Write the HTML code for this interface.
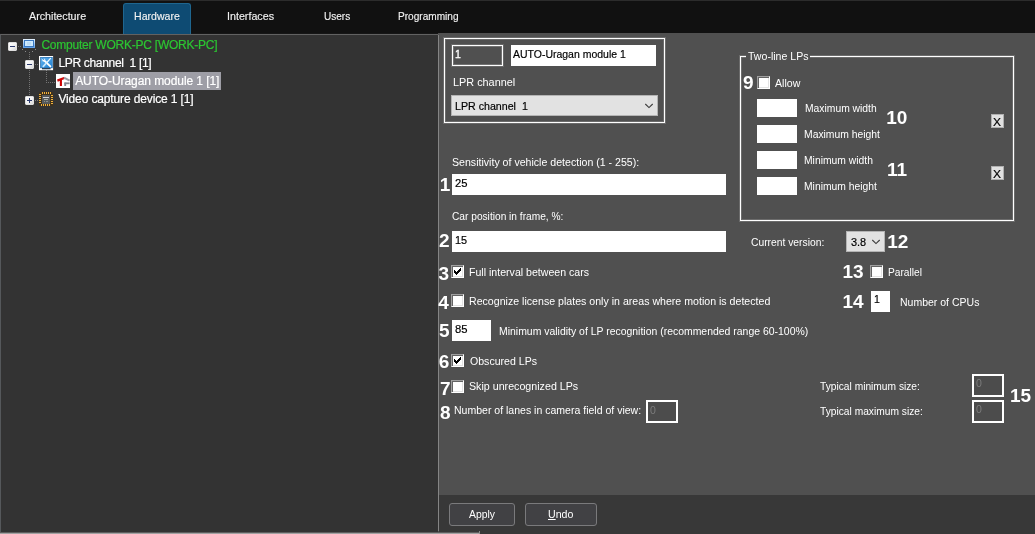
<!DOCTYPE html>
<html><head><meta charset="utf-8"><title>AUTO-Uragan module settings</title>
<style>
html,body{margin:0;padding:0;}
body{width:1035px;height:534px;overflow:hidden;background:#505050;position:relative;font-family:"Liberation Sans",sans-serif;font-size:11px;color:#fff;}
div,span{box-sizing:border-box;}
.a{position:absolute;}
.wrap{position:absolute;left:0;top:0;width:1035px;height:534px;will-change:transform;}
.gray{filter:grayscale(1);}
.tx{position:absolute;white-space:nowrap;}
#topbar{left:0;top:0;width:1035px;height:33px;background:#111111;border-top:1px solid #2c2c2c;}
#hwtab{left:123px;top:3px;width:68px;height:31px;background:#0e4b73;border:1px solid #1f668f;border-bottom:none;border-radius:3px 3px 0 0;}
#left{left:0;top:34px;width:438px;height:500px;background:#333333;border-top:1px solid #626262;border-left:1px solid #55585b;}
#lgap{left:0;top:33px;width:438px;height:1px;background:#161616;}
#lbot{left:0;top:532px;width:480px;height:2px;background:linear-gradient(#5e5e5e 50%,#a2a2a2 50%);}
#ltick{left:479px;top:531px;width:1px;height:3px;background:#8a8a8a;}
#split{left:438px;top:35px;width:1px;height:496px;background:#858585;}
#right{left:439px;top:33px;width:596px;height:462px;background:#505050;}
#bottombar{left:439px;top:495px;width:596px;height:39px;background:#383838;}
.sel{left:73px;top:72px;width:148px;height:18px;background:#9e9ea6;}
.exp{position:absolute;width:9px;height:9px;background:linear-gradient(135deg,#ffffff 0%,#f2f2f2 55%,#d6d6d6 100%);border:1px solid #dedede;border-radius:1px;}
.exp i{position:absolute;left:1px;top:3px;width:5px;height:1px;background:#2b3a6e;}
.exp b{position:absolute;left:3px;top:1px;width:1px;height:5px;background:#2b3a6e;}
.hd{position:absolute;height:1px;background-image:linear-gradient(90deg,#747474 50%,transparent 50%);background-size:2px 1px;}
.vd{position:absolute;width:1px;background-image:linear-gradient(180deg,#747474 50%,transparent 50%);background-size:1px 2px;}
.gb{position:absolute;border:1px solid #fff;box-shadow:0 0 0 1px rgba(255,255,255,.16),inset 0 0 0 1px rgba(255,255,255,.16);}
.inp{position:absolute;background:#fff;}
.dis1{position:absolute;background:#505050;border:1px solid #fff;box-shadow:0 0 0 1px rgba(255,255,255,.14),inset 0 0 0 1px rgba(255,255,255,.2);}
.dis2{position:absolute;background:#4c4c4c;border:2px solid #fff;}
.cmb{position:absolute;background:#e2e2e2;border:1px solid #b4b4b4;}
.cb{position:absolute;width:13px;height:13px;background:#fff;border-top:1px solid #a0a0a0;border-left:1px solid #a0a0a0;border-right:1px solid #fff;border-bottom:1px solid #fff;box-shadow:inset 1px 1px 0 #646464,inset -1px -1px 0 #e3e3e3;}
.xb{position:absolute;width:13px;height:14px;background:#e1e1e1;border:1px solid #b0b0b0;}
.btn{position:absolute;border:1px solid #7a7a7c;background:#414144;border-radius:3px;}
svg{position:absolute;overflow:visible;}
</style></head><body>
<div id="topbar" class="a"></div>
<div id="lgap" class="a"></div>
<div id="hwtab" class="a"></div>
<div id="left" class="a"></div>
<div id="split" class="a"></div>
<div id="right" class="a"></div>
<div id="bottombar" class="a"></div>
<div id="lbot" class="a"></div><div id="ltick" class="a"></div>

<!-- tree -->
<div class="a sel"></div>
<div class="hd" style="left:18px;top:46px;width:4px"></div>
<div class="vd" style="left:29px;top:52px;width:1px;height:44px"></div>
<div class="hd" style="left:35px;top:64px;width:4px"></div>
<div class="vd" style="left:46px;top:70px;width:1px;height:12px"></div>
<div class="hd" style="left:46px;top:82px;width:10px"></div>
<div class="hd" style="left:35px;top:100px;width:4px"></div>
<div class="exp" style="left:8px;top:42px"><i></i></div>
<div class="exp" style="left:25px;top:60px"><i></i></div>
<div class="exp" style="left:25px;top:96px"><i></i><b></b></div>
<svg style="left:0;top:0" width="80" height="110" viewBox="0 0 80 110" shape-rendering="crispEdges">
<defs>
<linearGradient id="gmon" x1="0" y1="0" x2="0" y2="1"><stop offset="0" stop-color="#e6f3ff"/><stop offset="1" stop-color="#5c9ee8"/></linearGradient>
<linearGradient id="gblue" x1="0" y1="0" x2="1" y2="1"><stop offset="0" stop-color="#62b4f0"/><stop offset="1" stop-color="#1f7fd0"/></linearGradient>
</defs>
<!-- computer -->
<rect x="23" y="39" width="12" height="9" fill="url(#gmon)"/>
<rect x="24" y="40" width="10" height="7" fill="#3a78c2"/>
<rect x="25" y="41" width="8" height="5" fill="#cdeaff"/>
<rect x="27" y="42" width="4" height="3" fill="#bcdcf6"/>
<g fill="#8a8a8a"><rect x="22" y="49" width="1" height="1"/><rect x="25" y="51" width="1" height="1"/><rect x="32" y="51" width="1" height="1"/><rect x="35" y="49" width="1" height="1"/></g>
<!-- LPR channel -->
<g shape-rendering="geometricPrecision">
<rect x="39" y="56" width="14.1" height="14.2" fill="#ffffff"/>
<rect x="40.2" y="57" width="12.4" height="11.2" fill="#245f98"/>
<rect x="40.7" y="57.5" width="11.7" height="10.2" fill="url(#gblue)"/>
<path d="M44.3 60.6 L50.4 66.4" stroke="#ffffff" stroke-width="1.9" stroke-linecap="round" fill="none"/>
<circle cx="43.8" cy="60" r="1.55" fill="#ffffff"/>
<path d="M42.2 58.2 L44.1 60.1 L43 58 Z" fill="#3d97de" stroke="#3d97de" stroke-width="0.7"/>
<path d="M50.5 58.4 L46.6 62.8" stroke="#e8f7ff" stroke-width="1.3" stroke-linecap="round" fill="none"/>
<path d="M45.9 63.5 L43.3 66.4" stroke="#c6e8ff" stroke-width="1.8" stroke-linecap="round" fill="none"/>
<rect x="42" y="68" width="8.6" height="1.3" fill="#2d4258"/>
</g>
<!-- module icon -->
<rect x="56" y="74" width="14" height="14" fill="#ffffff"/>
<g shape-rendering="geometricPrecision" fill="none">
<path d="M57.4 80.6 L64.2 78" stroke="#d00a0a" stroke-width="2.3"/>
<path d="M60.9 79.6 L60.9 86" stroke="#cc0000" stroke-width="2.1"/>
<path d="M64 77.7 L69.6 80.7" stroke="#9a9aa4" stroke-width="2"/>
<path d="M64.4 83.3 L69.6 83.3" stroke="#84848e" stroke-width="1.8"/>
<path d="M65.2 82.6 L65.2 86" stroke="#84848e" stroke-width="1.9"/>
</g>
<!-- chip -->
<rect x="39" y="92" width="14" height="14" fill="#4a3208" opacity="0.55"/>
<g fill="#f2b23e">
<rect x="42" y="92" width="1" height="2"/><rect x="44" y="92" width="1" height="2"/><rect x="46" y="92" width="1" height="2"/><rect x="48" y="92" width="1" height="2"/><rect x="50" y="92" width="1" height="2"/>
<rect x="41" y="104" width="1" height="2"/><rect x="43" y="104" width="1" height="2"/><rect x="45" y="104" width="1" height="2"/><rect x="47" y="104" width="1" height="2"/><rect x="49" y="104" width="1" height="2"/>
<rect x="39" y="94" width="2" height="1"/><rect x="39" y="96" width="2" height="1"/><rect x="39" y="98" width="2" height="1"/><rect x="39" y="100" width="2" height="1"/><rect x="39" y="102" width="2" height="1"/>
<rect x="51" y="95" width="2" height="1"/><rect x="51" y="97" width="2" height="1"/><rect x="51" y="99" width="2" height="1"/><rect x="51" y="101" width="2" height="1"/><rect x="51" y="103" width="2" height="1"/>
</g>
<rect x="42" y="95" width="8" height="9" fill="#565a5c"/>
<rect x="43" y="97" width="6" height="1" fill="#d6d6d6"/>
<rect x="44" y="99" width="4" height="1" fill="#a9b0a6"/>
<rect x="44" y="101" width="1" height="1" fill="#8a8f8a"/><rect x="46" y="101" width="2" height="1" fill="#8a8f8a"/>
</svg>


<!-- group 1 -->
<div class="gb" style="left:444px;top:38px;width:221px;height:85px"></div>
<div class="dis1" style="left:452px;top:45px;width:51px;height:21px"></div>
<div class="inp" style="left:511px;top:45px;width:145px;height:21px"></div>
<div class="cmb" style="left:451px;top:95px;width:207px;height:21px"></div>
<svg style="left:645px;top:103px" width="8" height="6" viewBox="0 0 8 6"><path d="M0.3 1 L4 4.6 L7.7 1" fill="none" stroke="#3c3c3c" stroke-width="1.1"/></svg>

<!-- main fields -->
<div class="inp" style="left:452px;top:174px;width:274px;height:21px"></div>
<div class="inp" style="left:452px;top:231px;width:274px;height:21px"></div>
<div class="cb" style="left:451px;top:265px"></div>
<div class="cb" style="left:451px;top:294px"></div>
<div class="inp" style="left:452px;top:320px;width:39px;height:21px"></div>
<div class="cb" style="left:451px;top:354px"></div>
<div class="cb" style="left:451px;top:380px"></div>
<div class="dis2" style="left:646px;top:400px;width:32px;height:23px"></div>
<svg style="left:454px;top:268px" width="7" height="7" viewBox="0 0 7 7" shape-rendering="crispEdges"><path d="M0 2h1v3h-1z M1 3h1v3h-1z M2 4h1v3h-1z M3 3h1v3h-1z M4 2h1v3h-1z M5 1h1v3h-1z M6 0h1v3h-1z" fill="#000"/></svg>
<svg style="left:454px;top:357px" width="7" height="7" viewBox="0 0 7 7" shape-rendering="crispEdges"><path d="M0 2h1v3h-1z M1 3h1v3h-1z M2 4h1v3h-1z M3 3h1v3h-1z M4 2h1v3h-1z M5 1h1v3h-1z M6 0h1v3h-1z" fill="#000"/></svg>

<!-- group 2 -->
<div class="gb" style="left:740px;top:56px;width:274px;height:165px"></div>
<div class="a" style="left:746px;top:55px;width:64px;height:3px;background:#505050"></div>
<div class="cb" style="left:757px;top:76px"></div>
<div class="inp" style="left:757px;top:99px;width:40px;height:18px"></div>
<div class="inp" style="left:757px;top:125px;width:40px;height:18px"></div>
<div class="inp" style="left:757px;top:151px;width:40px;height:18px"></div>
<div class="inp" style="left:757px;top:177px;width:40px;height:18px"></div>
<div class="xb" style="left:991px;top:114px"></div>
<div class="xb" style="left:991px;top:166px"></div>

<div class="cmb" style="left:846px;top:231px;width:39px;height:21px"></div>
<svg style="left:872px;top:239px" width="8" height="6" viewBox="0 0 8 6"><path d="M0.3 1 L4 4.6 L7.7 1" fill="none" stroke="#3c3c3c" stroke-width="1.1"/></svg>
<div class="cb" style="left:870px;top:265px"></div>
<div class="inp" style="left:871px;top:291px;width:19px;height:21px"></div>
<div class="dis2" style="left:972px;top:374px;width:32px;height:23px"></div>
<div class="dis2" style="left:972px;top:400px;width:32px;height:23px"></div>

<!-- buttons -->
<div class="btn" style="left:449px;top:503px;width:66px;height:23px"></div>
<div class="btn" style="left:525px;top:503px;width:72px;height:23px"></div>

<div class="wrap">
<div class="tx" id="r1" style="left:41.4px;top:38.2px;font-size:12px;line-height:14px;color:#2cc632;letter-spacing:-0.231px;-webkit-text-stroke:0.2px #2cc632;">Computer WORK-PC [WORK-PC]</div>
</div>
<div class="wrap gray">
<div class="tx" id="t1" style="left:29.0px;top:9.2px;font-size:11.8px;line-height:14px;color:#f2f2f2;transform-origin:0 50%;transform:scaleX(0.9070);-webkit-text-stroke:0.15px #f2f2f2;">Architecture</div>
<div class="tx" id="t2" style="left:134.0px;top:9.2px;font-size:11.8px;line-height:14px;color:#f2f2f2;transform-origin:0 50%;transform:scaleX(0.8956);-webkit-text-stroke:0.15px #f2f2f2;">Hardware</div>
<div class="tx" id="t3" style="left:226.8px;top:9.2px;font-size:11.8px;line-height:14px;color:#f2f2f2;transform-origin:0 50%;transform:scaleX(0.9071);-webkit-text-stroke:0.15px #f2f2f2;">Interfaces</div>
<div class="tx" id="t4" style="left:323.6px;top:9.2px;font-size:11.8px;line-height:14px;color:#f2f2f2;transform-origin:0 50%;transform:scaleX(0.8503);-webkit-text-stroke:0.15px #f2f2f2;">Users</div>
<div class="tx" id="t5" style="left:398.1px;top:9.2px;font-size:11.8px;line-height:14px;color:#f2f2f2;transform-origin:0 50%;transform:scaleX(0.8558);-webkit-text-stroke:0.15px #f2f2f2;">Programming</div>
<div class="tx" id="r2" style="left:58.4px;top:56.2px;font-size:12px;line-height:14px;color:#fff;letter-spacing:-0.319px;-webkit-text-stroke:0.2px #fff;">LPR channel&nbsp; 1 [1]</div>
<div class="tx" id="r3" style="left:75.2px;top:74.2px;font-size:12px;line-height:14px;color:#fff;letter-spacing:-0.069px;-webkit-text-stroke:0.2px #fff;">AUTO-Uragan module 1 [1]</div>
<div class="tx" id="r4" style="left:58.4px;top:92.2px;font-size:12px;line-height:14px;color:#fff;letter-spacing:-0.133px;-webkit-text-stroke:0.2px #fff;">Video capture device 1 [1]</div>
<div class="tx" id="g1id" style="left:455.3px;top:46.8px;font-size:11.7px;line-height:14px;color:#fff;transform-origin:0 50%;transform:scaleX(0.9000);-webkit-text-stroke:0.35px #fff;">1</div>
<div class="tx" id="g1name" style="left:513.1px;top:46.8px;font-size:11.7px;line-height:14px;color:#000;transform-origin:0 50%;transform:scaleX(0.8966);-webkit-text-stroke:0.2px #000;">AUTO-Uragan module 1</div>
<div class="tx" id="g1lbl" style="left:452.9px;top:74.8px;font-size:11.7px;line-height:14px;color:#fff;transform-origin:0 50%;transform:scaleX(0.9292);">LPR channel</div>
<div class="tx" id="g1cmb" style="left:454.8px;top:98.8px;font-size:11.7px;line-height:14px;color:#000;transform-origin:0 50%;transform:scaleX(0.9109);-webkit-text-stroke:0.2px #000;">LPR channel&nbsp; 1</div>
<div class="tx" id="l1" style="left:451.6px;top:154.8px;font-size:11.7px;line-height:14px;color:#fff;transform-origin:0 50%;transform:scaleX(0.9061);">Sensitivity of vehicle detection (1 - 255):</div>
<div class="tx" id="v1" style="left:454.7px;top:175.8px;font-size:11.7px;line-height:14px;color:#000;transform-origin:0 50%;transform:scaleX(0.9604);-webkit-text-stroke:0.2px #000;">25</div>
<div class="tx" id="l2" style="left:451.6px;top:208.8px;font-size:11.7px;line-height:14px;color:#fff;transform-origin:0 50%;transform:scaleX(0.8705);">Car position in frame, %:</div>
<div class="tx" id="v2" style="left:455.0px;top:232.8px;font-size:11.7px;line-height:14px;color:#000;transform-origin:0 50%;transform:scaleX(0.9297);-webkit-text-stroke:0.2px #000;">15</div>
<div class="tx" id="l3" style="left:468.8px;top:264.8px;font-size:11.7px;line-height:14px;color:#fff;transform-origin:0 50%;transform:scaleX(0.9062);">Full interval between cars</div>
<div class="tx" id="l4" style="left:468.8px;top:293.8px;font-size:11.7px;line-height:14px;color:#fff;transform-origin:0 50%;transform:scaleX(0.9076);">Recognize license plates only in areas where motion is detected</div>
<div class="tx" id="v5" style="left:454.7px;top:321.8px;font-size:11.7px;line-height:14px;color:#000;transform-origin:0 50%;transform:scaleX(0.9604);-webkit-text-stroke:0.2px #000;">85</div>
<div class="tx" id="l5" style="left:498.9px;top:323.8px;font-size:11.7px;line-height:14px;color:#fff;transform-origin:0 50%;transform:scaleX(0.8936);">Minimum validity of LP recognition (recommended range 60-100%)</div>
<div class="tx" id="l6" style="left:469.7px;top:353.8px;font-size:11.7px;line-height:14px;color:#fff;transform-origin:0 50%;transform:scaleX(0.9046);">Obscured LPs</div>
<div class="tx" id="l7" style="left:468.8px;top:378.8px;font-size:11.7px;line-height:14px;color:#fff;transform-origin:0 50%;transform:scaleX(0.9134);">Skip unrecognized LPs</div>
<div class="tx" id="l8" style="left:453.6px;top:402.8px;font-size:11.7px;line-height:14px;color:#fff;transform-origin:0 50%;transform:scaleX(0.9001);">Number of lanes in camera field of view:</div>
<div class="tx" id="v8" style="left:650.3px;top:402.8px;font-size:11.7px;line-height:14px;color:#7c7c7c;transform-origin:0 50%;transform:scaleX(0.9000);">0</div>
<div class="tx" id="g2t" style="left:748.1px;top:48.8px;font-size:11.7px;line-height:14px;color:#fff;transform-origin:0 50%;transform:scaleX(0.9043);">Two-line LPs</div>
<div class="tx" id="l9" style="left:775.2px;top:75.8px;font-size:11.7px;line-height:14px;color:#fff;transform-origin:0 50%;transform:scaleX(0.9056);">Allow</div>
<div class="tx" id="la" style="left:804.9px;top:100.8px;font-size:11.7px;line-height:14px;color:#fff;transform-origin:0 50%;transform:scaleX(0.8831);">Maximum width</div>
<div class="tx" id="lb" style="left:803.7px;top:126.8px;font-size:11.7px;line-height:14px;color:#fff;transform-origin:0 50%;transform:scaleX(0.8863);">Maximum height</div>
<div class="tx" id="lc" style="left:803.7px;top:152.8px;font-size:11.7px;line-height:14px;color:#fff;transform-origin:0 50%;transform:scaleX(0.8840);">Minimum width</div>
<div class="tx" id="ld" style="left:803.7px;top:178.8px;font-size:11.7px;line-height:14px;color:#fff;transform-origin:0 50%;transform:scaleX(0.8836);">Minimum height</div>
<div class="tx" id="lcv" style="left:750.8px;top:234.8px;font-size:11.7px;line-height:14px;color:#fff;transform-origin:0 50%;transform:scaleX(0.8815);">Current version:</div>
<div class="tx" id="v12" style="left:851.0px;top:234.8px;font-size:11.7px;line-height:14px;color:#000;transform-origin:0 50%;transform:scaleX(0.9354);-webkit-text-stroke:0.2px #000;">3.8</div>
<div class="tx" id="l13" style="left:887.9px;top:264.8px;font-size:11.7px;line-height:14px;color:#fff;transform-origin:0 50%;transform:scaleX(0.8721);">Parallel</div>
<div class="tx" id="v14" style="left:873.8px;top:291.8px;font-size:11.7px;line-height:14px;color:#000;transform-origin:0 50%;transform:scaleX(0.9000);-webkit-text-stroke:0.2px #000;">1</div>
<div class="tx" id="l14" style="left:900.4px;top:294.8px;font-size:11.7px;line-height:14px;color:#fff;transform-origin:0 50%;transform:scaleX(0.8988);">Number of CPUs</div>
<div class="tx" id="l15a" style="left:819.8px;top:378.8px;font-size:11.7px;line-height:14px;color:#fff;transform-origin:0 50%;transform:scaleX(0.8739);">Typical minimum size:</div>
<div class="tx" id="l15b" style="left:819.8px;top:403.8px;font-size:11.7px;line-height:14px;color:#fff;transform-origin:0 50%;transform:scaleX(0.8744);">Typical maximum size:</div>
<div class="tx" id="v15a" style="left:976.2px;top:375.8px;font-size:11.7px;line-height:14px;color:#7c7c7c;transform-origin:0 50%;transform:scaleX(0.9000);">0</div>
<div class="tx" id="v15b" style="left:976.2px;top:401.8px;font-size:11.7px;line-height:14px;color:#7c7c7c;transform-origin:0 50%;transform:scaleX(0.9000);">0</div>
<div class="tx" id="x1" style="left:993.0px;top:114.8px;font-size:11.7px;line-height:14px;color:#000;transform-origin:0 50%;transform:scaleX(1.0261);-webkit-text-stroke:0.2px #000;">X</div>
<div class="tx" id="x2" style="left:993.0px;top:166.8px;font-size:11.7px;line-height:14px;color:#000;transform-origin:0 50%;transform:scaleX(1.0261);-webkit-text-stroke:0.2px #000;">X</div>
<div class="tx" id="bapply" style="left:468.9px;top:507.2px;font-size:11.8px;line-height:14px;color:#fff;transform-origin:0 50%;transform:scaleX(0.8809);">Apply</div>
<div class="tx" id="bundo" style="left:548.4px;top:507.2px;font-size:11.8px;line-height:14px;color:#fff;transform-origin:0 50%;transform:scaleX(0.9001);"><span style="text-decoration:underline">U</span>ndo</div>
<div class="tx" id="n1" style="left:439.7px;top:173.2px;font-size:19px;line-height:23px;color:#fff;font-weight:bold;">1</div>
<div class="tx" id="n2" style="left:438.9px;top:229.2px;font-size:19px;line-height:23px;color:#fff;font-weight:bold;">2</div>
<div class="tx" id="n3" style="left:438.6px;top:262.2px;font-size:19px;line-height:23px;color:#fff;font-weight:bold;">3</div>
<div class="tx" id="n4" style="left:438.2px;top:291.2px;font-size:19px;line-height:23px;color:#fff;font-weight:bold;">4</div>
<div class="tx" id="n5" style="left:438.9px;top:319.2px;font-size:19px;line-height:23px;color:#fff;font-weight:bold;">5</div>
<div class="tx" id="n6" style="left:438.7px;top:350.2px;font-size:19px;line-height:23px;color:#fff;font-weight:bold;">6</div>
<div class="tx" id="n7" style="left:439.9px;top:377.2px;font-size:19px;line-height:23px;color:#fff;font-weight:bold;">7</div>
<div class="tx" id="n8" style="left:439.9px;top:401.2px;font-size:19px;line-height:23px;color:#fff;font-weight:bold;">8</div>
<div class="tx" id="n9" style="left:742.9px;top:71.2px;font-size:19px;line-height:23px;color:#fff;font-weight:bold;">9</div>
<div class="tx" id="n10" style="left:886.2px;top:106.2px;font-size:19px;line-height:23px;color:#fff;font-weight:bold;">10</div>
<div class="tx" id="n11" style="left:887.0px;top:158.2px;font-size:19px;line-height:23px;color:#fff;font-weight:bold;">11</div>
<div class="tx" id="n12" style="left:887.2px;top:230.2px;font-size:19px;line-height:23px;color:#fff;font-weight:bold;">12</div>
<div class="tx" id="n13" style="left:842.4px;top:260.2px;font-size:19px;line-height:23px;color:#fff;font-weight:bold;">13</div>
<div class="tx" id="n14" style="left:842.4px;top:290.2px;font-size:19px;line-height:23px;color:#fff;font-weight:bold;">14</div>
<div class="tx" id="n15" style="left:1010.0px;top:384.2px;font-size:19px;line-height:23px;color:#fff;font-weight:bold;">15</div>
</div>
</body></html>
